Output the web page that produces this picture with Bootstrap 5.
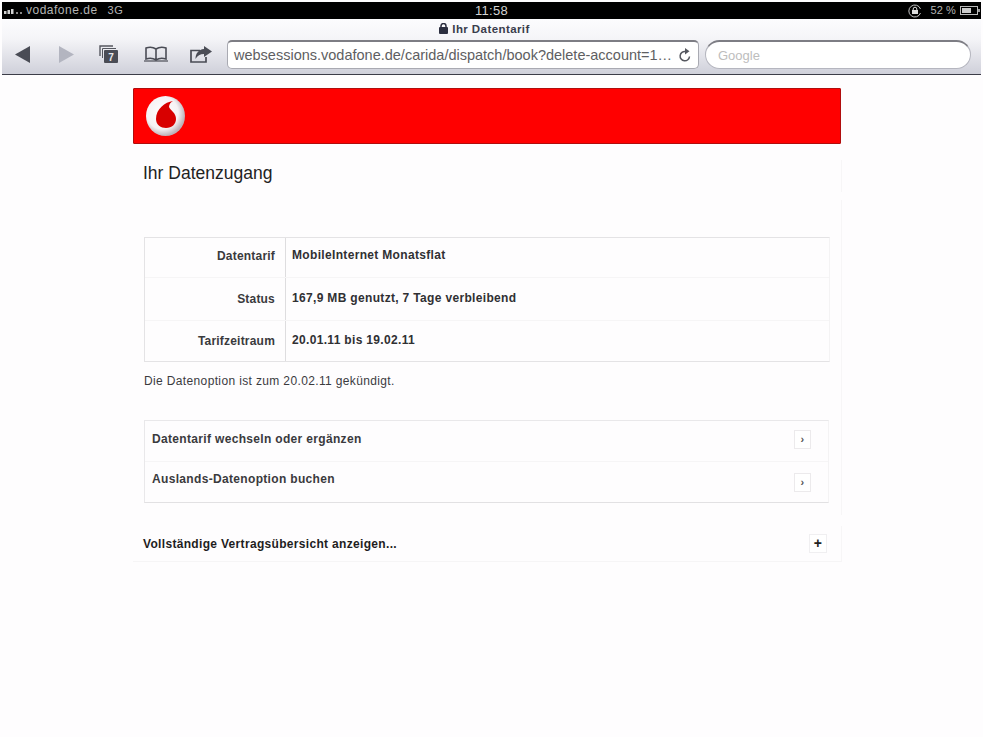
<!DOCTYPE html>
<html lang="de">
<head>
<meta charset="utf-8">
<title>Ihr Datentarif</title>
<link href="https://cdn.jsdelivr.net/npm/bootstrap@5.3.0/dist/css/bootstrap.min.css" rel="stylesheet">
<style>
html,body{height:100%;margin:0}
body{background:#fefdfe;font-family:"Liberation Sans",Arial,sans-serif;color:#2b2b2b;overflow:hidden;padding-top:2px}
.ios-status{height:17px;margin:0 2px;background:#000;color:#b4b4b4;font-size:12px;line-height:15px;padding:0;letter-spacing:.5px}
.ios-status .clock{font-size:13px;color:#d4d4d4;letter-spacing:.3px}
.sb-left{width:200px;padding-left:2px}
.sb-right{width:200px}
.gap-3g{margin-left:10px;font-size:11px}
.sig-ico{margin-right:3px}
.rot-ico{margin-right:9px}
.bat-txt{font-size:11px;letter-spacing:.1px}
.bat-ico{margin-left:4px}
.ios-bar{height:56px;margin:0 2px;background:linear-gradient(#fcfcfe 0,#f5f5f8 35%,#cfd0da 100%);border-bottom:1px solid #3c3d48}
.ios-title{height:19px;padding-right:14px;font-size:11.5px;font-weight:700;color:#3a3d4c;line-height:20px;letter-spacing:.42px}
.ios-tools{height:32px;padding:0 0 0 13px}
.tool-ico{display:block;flex:none}
.ti-fwd{margin-left:29px}
.ti-tabs{margin-left:25px}
.ti-book{margin-left:26px}
.ti-share{margin-left:22px}
.url-field{width:472px;height:29px;background:#fff;border:1px solid #a9aab2;border-top:2px solid #7d7d84;border-radius:5px;font-size:14.5px;color:#5e5e62;line-height:26px;padding:0 7px 0 6px;margin-left:15px;white-space:nowrap}
.search-field{width:266px;height:29px;background:#fff;border:1px solid #b5b6bf;border-top:2px solid #7d7d84;border-radius:15px;color:#bdbdbd;font-size:13px;line-height:27px;padding-left:12px;margin-left:6px}
.page-wrap{width:709px;margin:13px 0 0 133px}
.red-head{height:56px;width:708px;background:#f00;border:1px solid #b00d0d;border-radius:1px;padding-left:12px}
.head-block{height:32px;padding:1px 0 0 10px;border-right:1px solid #f7f6f7;font-size:17.5px;line-height:24px;color:#222}
.main-block{margin-top:8px;padding:37px 11px 0 11px;height:315px;border-right:1px solid #f7f6f7}
.info-box{height:125px;border:1px solid #e4e3e5;border-right-color:#f4f3f4;font-weight:700;font-size:12px}
.info-row{border-bottom:1px solid #f6f5f6}
.ir-a{height:40px}
.ir-b{height:43px}
.ir-c{flex:1 1 0;border-bottom:0}
.info-key{width:141px;border-right:1px solid #dedddf;padding-right:10px;color:#3a3a3d;letter-spacing:.2px}
.info-val{padding-left:6px;color:#303033;letter-spacing:.33px}
.ir-a .info-val{padding-bottom:5px}
.ir-a .info-key{padding-bottom:3px}
.ir-b .info-val{padding-bottom:2px}
.ir-c .info-val{padding-bottom:2px}
.note-line{font-size:12px;margin:11px 0 0;line-height:16px;color:#3b3b3e;letter-spacing:.36px}
.link-box{margin:31px 1px 0 0;height:83px;border:1px solid #e9e8ea;border-right-color:#f4f3f4;border-bottom-color:#e2e1e3;font-weight:700;font-size:12px;letter-spacing:.33px;color:#3a3a3d}
.link-row{padding:0 17px 0 7px}
.lr-a{height:40px;padding-bottom:4px}
.lr-b{flex:1 1 0;border-top:1px solid #f6f5f6}
.lr-b>span:first-child{padding-bottom:6px}
.mini-btn{width:17px;height:19px;border:1px solid #eceaec;background:#fff;font-size:11px;line-height:16px;text-align:center;color:#555;font-weight:700}
.more-block{height:36px;margin-top:11px;padding:0 14px 0 10px;border-right:1px solid #f7f6f7;border-bottom:1px solid #f6f5f6;font-weight:700;font-size:12px;letter-spacing:.32px;color:#1e1e1e}
.plus-btn{width:18px;height:19px;border:1px solid #f0eff1;background:#fff;font-size:14px;line-height:16px;text-align:center;color:#222}
</style>
</head>
<body>
<div class="ios-status d-flex align-items-center justify-content-between">
  <div class="sb-left d-flex align-items-center">
    <svg class="sig-ico" width="19" height="7" viewBox="0 0 19 7"><g fill="#d0d0d0"><rect x="0" y="4" width="2.500" height="3"/><rect x="3.500" y="3" width="2.500" height="4"/><rect x="7" y="2" width="2.500" height="5"/></g><g fill="#888"><rect x="12" y="5" width="2" height="2"/><rect x="16" y="5" width="2" height="2"/></g></svg>
    <span>vodafone.de</span><span class="gap-3g">3G</span>
  </div>
  <div class="clock">11:58</div>
  <div class="sb-right d-flex align-items-center justify-content-end">
    <svg class="rot-ico" width="14" height="14" viewBox="0 0 14 14"><path d="M12.500 9a6 6 0 1 1 0-4" fill="none" stroke="#c4c4c4" stroke-width="1"/><rect x="4" y="6" width="6" height="4" fill="#ddd"/><path d="M5.200 6V5a1.800 1.800 0 0 1 3.600 0v1" fill="none" stroke="#ddd"/></svg>
    <span class="bat-txt">52 %</span>
    <svg class="bat-ico" width="21" height="9" viewBox="0 0 21 9"><rect x=".5" y=".5" width="17" height="8" fill="none" stroke="#bbb"/><rect x="2" y="2" width="9" height="5" fill="#ccc"/><rect x="18" y="3" width="2" height="3" fill="#999"/></svg>
  </div>
</div>
<div class="ios-bar">
  <div class="ios-title d-flex justify-content-center align-items-center gap-1">
    <svg width="9" height="11" viewBox="0 0 9 11"><rect x="0" y="4" width="9" height="7" rx="1" fill="#2c2f40"/><path d="M2 5V3a2.500 2.500 0 0 1 5 0v2" fill="none" stroke="#2c2f40" stroke-width="1.5"/></svg>
    <span>Ihr Datentarif</span>
  </div>
  <div class="ios-tools d-flex align-items-center">
    <svg class="tool-ico" width="15" height="17" viewBox="0 0 15 17"><path d="M15 0V17L0 8.500Z" fill="#4a4c55"/></svg>
    <svg class="tool-ico ti-fwd" width="15" height="17" viewBox="0 0 15 17"><path d="M0 0V17L15 8.500Z" fill="#b3b5c0"/></svg>
    <svg class="tool-ico ti-tabs" width="19" height="18" viewBox="0 0 19 18"><path d="M1 11V1H14" fill="none" stroke="#55575f" stroke-width="1.4"/><path d="M3.500 13V3.500H17" fill="none" stroke="#55575f" stroke-width="1"/><rect x="5" y="5" width="14" height="13" rx="1" fill="#4a4c55"/><text x="12" y="15.500" font-size="10" font-weight="700" text-anchor="middle" fill="#e8e8ec" font-family="Liberation Sans">7</text></svg>
    <svg class="tool-ico ti-book" width="24" height="16" viewBox="0 0 24 16"><path d="M12 3C9 1 5 1 2 2V13C5 12 9 12 12 14C15 12 19 12 22 13V2C19 1 15 1 12 3ZM12 3V14" fill="none" stroke="#4a4c55" stroke-width="1.6"/><path d="M0 15H24" stroke="#4a4c55" stroke-width="1.200"/></svg>
    <svg class="tool-ico ti-share" width="22" height="17" viewBox="0 0 22 17"><path d="M10 4.500H1V16H16V11" fill="none" stroke="#4a4c55" stroke-width="1.700"/><path d="M14 0L22 5.500L14 11V8C10 8 7.500 9.500 5.500 13C5.500 7.500 8.500 3.500 14 3Z" fill="#4a4c55"/></svg>
    <div class="url-field d-flex align-items-center justify-content-between">
      <span>websessions.vodafone.de/carida/dispatch/book?delete-account=1…</span>
      <svg class="tool-ico" width="12" height="14" viewBox="0 0 12 14"><path d="M10.500 8.500A4.700 4.700 0 1 1 6.500 3.500" fill="none" stroke="#55575f" stroke-width="1.500"/><path d="M6 0L10.500 3.300L6 6.500Z" fill="#55575f"/></svg>
    </div>
    <div class="search-field">Google</div>
  </div>
</div>
<div class="page-wrap">
  <div class="red-head d-flex align-items-center">
    <svg width="39" height="40" viewBox="0 0 39 40">
      <defs><radialGradient id="rg" cx="42%" cy="42%" r="58%"><stop offset="0" stop-color="#fff"/><stop offset=".7" stop-color="#f6f2f4"/><stop offset="1" stop-color="#bdb2b8"/></radialGradient></defs>
      <ellipse cx="19.500" cy="20" rx="19.500" ry="20" fill="url(#rg)"/>
      <path d="M27 5C19 6 10 13 10 23C10 29 15 32 20 32C26 32 30 28 30 23C30 17 25 15 23 11C23 8 25 6 27 5Z" fill="#d80000"/>
    </svg>
  </div>
  <div class="head-block mt-3">Ihr Datenzugang</div>
  <div class="main-block">
    <div class="info-box d-flex flex-column">
      <div class="info-row ir-a d-flex align-items-stretch"><div class="info-key d-flex align-items-center justify-content-end">Datentarif</div><div class="info-val d-flex align-items-center">MobileInternet Monatsflat</div></div>
      <div class="info-row ir-b d-flex align-items-stretch"><div class="info-key d-flex align-items-center justify-content-end">Status</div><div class="info-val d-flex align-items-center">167,9 MB genutzt, 7 Tage verbleibend</div></div>
      <div class="info-row ir-c d-flex align-items-stretch"><div class="info-key d-flex align-items-center justify-content-end">Tarifzeitraum</div><div class="info-val d-flex align-items-center">20.01.11 bis 19.02.11</div></div>
    </div>
    <p class="note-line">Die Datenoption ist zum 20.02.11 gekündigt.</p>
    <div class="link-box d-flex flex-column">
      <div class="link-row lr-a d-flex align-items-center justify-content-between"><span>Datentarif wechseln oder ergänzen</span><span class="mini-btn">›</span></div>
      <div class="link-row lr-b d-flex align-items-center justify-content-between"><span>Auslands-Datenoption buchen</span><span class="mini-btn">›</span></div>
    </div>
  </div>
  <div class="more-block d-flex align-items-center justify-content-between"><span>Vollständige Vertragsübersicht anzeigen...</span><span class="plus-btn">+</span></div>
</div>
<script src="https://cdn.jsdelivr.net/npm/bootstrap@5.3.0/dist/js/bootstrap.bundle.min.js"></script>
</body>
</html>
